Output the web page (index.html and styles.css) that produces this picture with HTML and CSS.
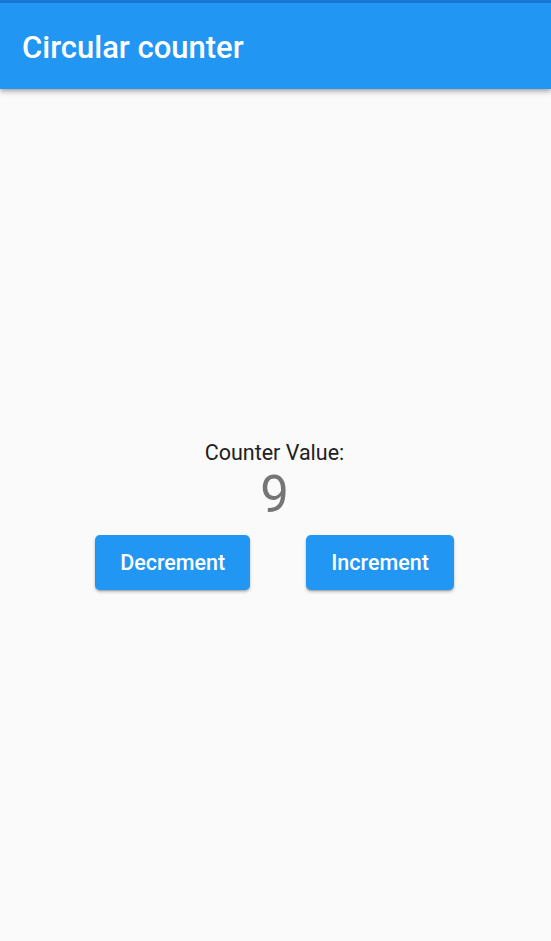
FILE: index.html
```html
<!DOCTYPE html>
<html>
<head>
<meta charset="utf-8">
<link rel="stylesheet" href="styles.css">
</head>
<body>
<header class="appbar">
  <div class="status"></div>
  <h1 class="title">Circular counter</h1>
</header>
<main class="content">
  <div class="label">Counter Value:</div>
  <div class="value">9</div>
  <div class="buttons">
    <button class="btn btn-dec">Decrement</button>
    <button class="btn btn-inc">Increment</button>
  </div>
</main>
</body>
</html>
```

FILE: styles.css
```css
html, body {
  margin: 0;
  padding: 0;
  background: #fafafa;
  font-family: Roboto, "Noto Sans", sans-serif;
}
body {
  width: 551px;
  height: 941px;
  display: flex;
  flex-direction: column;
  overflow: hidden;
}
.appbar {
  background: #2196f3;
  height: 89px;
  flex: none;
  box-shadow: 0 2px 4px rgba(0,0,0,0.25), 0 4px 6px rgba(0,0,0,0.1);
  position: relative;
  z-index: 1;
  display: flex;
  flex-direction: column;
}
.status {
  height: 3px;
  background: #1976d2;
}
.title {
  margin: 0;
  padding: 2px 0 0 22px;
  flex: 1;
  display: flex;
  align-items: center;
  color: #fff;
  font-size: 31px;
  font-weight: 500;
  letter-spacing: 0;
}
.content {
  flex: 1;
  display: flex;
  flex-direction: column;
  align-items: center;
  justify-content: center;
  padding-right: 2px;
}
.label {
  font-size: 21.5px;
  line-height: 25px;
  color: #212121;
}
.value {
  font-size: 51px;
  line-height: 60px;
  color: #757575;
}
.buttons {
  display: flex;
  gap: 56px;
  margin-top: 10px;
}
.btn {
  border: none;
  border-radius: 5px;
  background: #2196f3;
  color: #fff;
  font-family: Roboto, sans-serif;
  font-size: 21.5px;
  font-weight: 500;
  height: 55px;
  padding: 0 25px;
  box-shadow: 0 2px 3px rgba(0,0,0,0.25), 0 1px 1px rgba(0,0,0,0.12);
}
```
